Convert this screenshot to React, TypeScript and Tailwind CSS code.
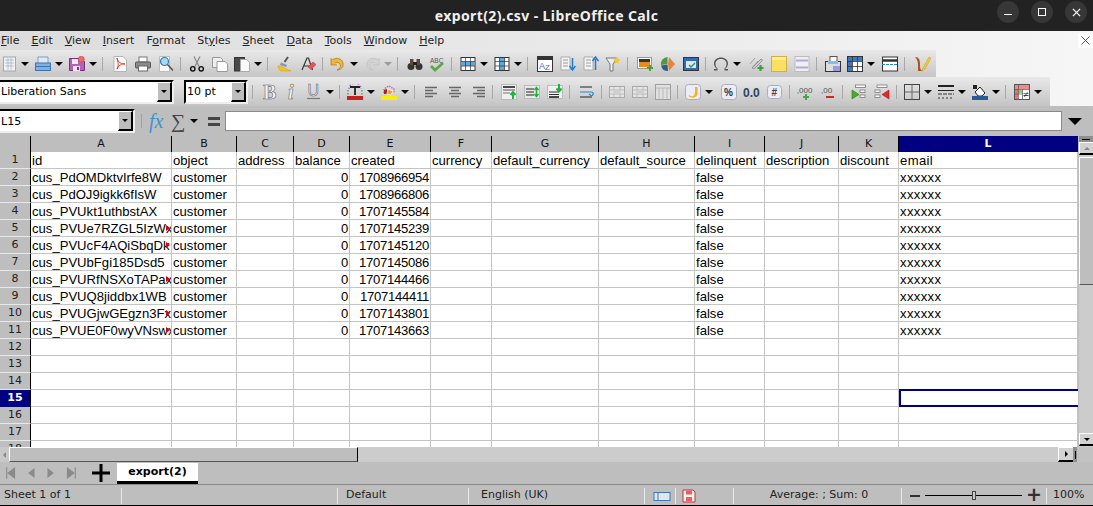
import type { ReactNode } from 'react';

const uiFont = "font-['DejaVu_Sans',sans-serif]";
const cellFont = "font-['Liberation_Sans',sans-serif]";

const menus: [string, string, string][] = [
  ['', 'F', 'ile'],
  ['', 'E', 'dit'],
  ['', 'V', 'iew'],
  ['', 'I', 'nsert'],
  ['F', 'o', 'rmat'],
  ['St', 'y', 'les'],
  ['', 'S', 'heet'],
  ['', 'D', 'ata'],
  ['', 'T', 'ools'],
  ['', 'W', 'indow'],
  ['', 'H', 'elp'],
];

const columns = ['A', 'B', 'C', 'D', 'E', 'F', 'G', 'H', 'I', 'J', 'K', 'L'];
const headers = ['id', 'object', 'address', 'balance', 'created', 'currency', 'default_currency', 'default_source', 'delinquent', 'description', 'discount', 'email'];

const customers = [
  ['cus_PdOMDktvIrfe8W', '1708966954', false],
  ['cus_PdOJ9igkk6fIsW', '1708966806', false],
  ['cus_PVUkt1uthbstAX', '1707145584', false],
  ['cus_PVUe7RZGL5IzWx', '1707145239', true],
  ['cus_PVUcF4AQiSbqDk', '1707145120', true],
  ['cus_PVUbFgi185Dsd5', '1707145086', false],
  ['cus_PVURfNSXoTAPax', '1707144466', true],
  ['cus_PVUQ8jiddbx1WB', '1707144411', false],
  ['cus_PVUGjwGEgzn3Fx', '1707143801', true],
  ['cus_PVUE0F0wyVNswx', '1707143663', true],
] as const;

function Svg({ children, className = '' }: { children: ReactNode; className?: string }) {
  return (
    <svg viewBox="0 0 16 16" className={`w-4 h-4 shrink-0 ${className}`} fill="none">
      {children}
    </svg>
  );
}

function Ic({ children }: { children: ReactNode }) {
  return <Svg className="mr-[7px]">{children}</Svg>;
}

// the B, i and U glyphs are drawn large, so their box is taller than the 16px icons
function TallIc({ children }: { children: ReactNode }) {
  return (
    <svg viewBox="0 0 16 24" className="w-4 h-6 shrink-0 mr-[7px]" fill="none">
      {children}
    </svg>
  );
}

function Arrow({ light = false }: { light?: boolean }) {
  return (
    <div className={`ml-1 w-0 h-0 border-x-4 border-x-transparent border-t-[4px] ${light ? 'border-t-[#9a9a9a]' : 'border-t-black'}`} />
  );
}

function Drop({ children, light = false }: { children: ReactNode; light?: boolean }) {
  return (
    <div className="flex items-center shrink-0 w-[34px]">
      <Svg>{children}</Svg>
      <Arrow light={light} />
    </div>
  );
}

function Sep() {
  return <div className="w-px h-[14px] bg-[#a8a8a8] -ml-px mr-[9px] shrink-0" />;
}

function Nudge({ back }: { back: 1 | 2 }) {
  return <div className={back === 1 ? '-ml-px' : '-ml-[2px]'} />;
}

function Combo({ text, className }: { text: string; className: string }) {
  return (
    <div className={`relative shrink-0 h-[24px] bg-white border-2 border-black border-r-[#eee] border-b-[#eee] flex items-center text-[11px] text-black ${uiFont} ${className}`}>
      <span className="pl-[1px] leading-none">{text}</span>
      <div className="absolute top-0 bottom-0 right-0 w-[15px] bg-[#bdbdbd] border-l border-t border-white border-r-2 border-b-2 border-r-black border-b-black flex items-center justify-center">
        <div className="w-0 h-0 border-x-[3px] border-x-transparent border-t-[3px] border-t-black" />
      </div>
    </div>
  );
}

const GridTable = ({ cols }: { cols?: boolean }) => (
  <>
    <rect x="1" y="1.5" width="14" height="13" fill="#fff" stroke="#333" />
    {cols ? <rect x="5.5" y="2" width="5" height="12" fill="#5ea8dc" /> : <rect x="1.5" y="5.5" width="13" height="4.5" fill="#5ea8dc" />}
    <path d="M1 5.5h14M1 10h14M5.5 2v12M10.5 2v12" stroke="#333" strokeWidth=".7" />
  </>
);

// alignment icons are 12px wide in the picture, two long bars and two short
const alignPaths = {
  l: 'M1 3.5h12M1 6.5h8M1 9.5h12M1 12.5h8',
  c: 'M1 3.5h12M3 6.5h8M1 9.5h12M3 12.5h8',
  r: 'M1 3.5h12M5 6.5h8M1 9.5h12M5 12.5h8',
};

const Lines = ({ kind }: { kind: 'l' | 'c' | 'r' }) => <path d={alignPaths[kind]} stroke="#666" strokeWidth="1.5" />;

const Merge = () => (
  <>
    <rect x=".5" y="2.5" width="15" height="11" fill="#e4e4e4" stroke="#a9a9a9" />
    <path d="M1 6h14M1 10h14M5 3v3M11 3v3M5 10v3M11 10v3M4 8h8" stroke="#b0b0b0" strokeWidth=".8" />
  </>
);

function Toolbar1() {
  return (
    <div className="flex items-center h-[27px] w-[936px] pl-[1px] bg-gradient-to-b from-[#e9e9e9] to-[#c6c6c6]">
      <Drop>
        <rect x="2.5" y="1" width="12" height="14" fill="#f2f2f2" stroke="#a0a8b0" />
        <path d="M4 4h9M4 7h9M4 10h9M7 2v12M10 2v12" stroke="#a6b6c6" strokeWidth=".8" />
      </Drop>
      <Drop>
        <path d="M3 1h10v7H3z" fill="#dfe9f4" stroke="#7aa0c4" />
        <rect x=".5" y="7" width="15" height="7.5" fill="#7fb0de" stroke="#3d75b0" />
        <path d="M1 10.5h14" stroke="#3d75b0" />
      </Drop>
      <Drop>
        <path d="M.5 2.5h10l5 3v9H.5z" fill="#b263b8" stroke="#7b2f80" />
        <rect x="3" y="3" width="6" height="5" fill="#f3e9f4" />
        <rect x="4" y="10" width="7" height="5" fill="#f3e9f4" />
        <rect x="8" y="11" width="2" height="3" fill="#7b2f80" />
        <circle cx="12.3" cy="3.2" r="3" fill="#ee6a62" stroke="#c93b33" strokeWidth=".5" />
      </Drop>
      <Sep />
      <Ic>
        <path d="M2 .5h9l3.500 3.500v11.500H2z" fill="#fbfbfb" stroke="#b5b5b5" />
        <path d="M5 2c1 4 2 7 0 11 1-3 5-6 8-5-3 0-7-1-8-6z" stroke="#e23b33" strokeWidth="1" />
      </Ic>
      <Ic>
        <rect x="4" y="1" width="8" height="5" fill="#fff" stroke="#777" />
        <rect x=".5" y="6" width="15" height="6" rx="1" fill="#8a8a8a" stroke="#555" />
        <rect x="3.5" y="10" width="9" height="5" fill="#fff" stroke="#666" />
      </Ic>
      <Ic>
        <path d="M1.5 .5h10v15h-10z" fill="#fafafa" stroke="#bbb" />
        <circle cx="6.5" cy="5.5" r="4" fill="#a8d8f4" stroke="#3b7ab0" strokeWidth="1.2" />
        <path d="M9.5 8.5l5.500 6" stroke="#555" strokeWidth="1.6" />
      </Ic>
      <Sep />
      <Nudge back={1} />
      <Ic>
        <path d="M5 .5l5 10M11 .5l-5 10" stroke="#888" strokeWidth="1.2" />
        <circle cx="3.8" cy="12.8" r="2.2" stroke="#111" strokeWidth="1.4" />
        <circle cx="12.2" cy="12.8" r="2.2" stroke="#111" strokeWidth="1.4" />
      </Ic>
      <Ic>
        <path d="M.5 1.5h8l2 2v8H.5z" fill="#eee" stroke="#999" />
        <path d="M5 5.5h8l2.500 2.500v7.500H5z" fill="#fff" stroke="#999" />
      </Ic>
      <Nudge back={1} />
      <Drop>
        <rect x=".5" y="1.500" width="10" height="13.500" fill="#4a4a4a" stroke="#333" />
        <path d="M6.500 3.500h6l3 3v9h-9z" fill="#fafafa" stroke="#aaa" />
      </Drop>
      <Sep />
      <Ic>
        <path d="M11 1L7.500 6" stroke="#555" strokeWidth="2" />
        <path d="M4 6.500l6 2.500-1 2-6-2z" fill="#7a98c8" />
        <path d="M1 10c3 0 5 .5 6 2l7 3H4C2 14 1 12 1 10z" fill="#f4c21c" stroke="#d09a10" strokeWidth=".5" />
      </Ic>
      <Ic>
        <path d="M2 14L7 2h1.500l4 12M4 10h6" stroke="#333" strokeWidth="1.200" />
        <path d="M8 11l5-5 3 2.500-5 5z" fill="#e8505a" stroke="#b93038" strokeWidth=".5" />
      </Ic>
      <Sep />
      <Nudge back={2} />
      <Drop>
        <path d="M2 4c4-3 10-2 11 3s-3 7-6 7c3-1 4-4 3-6S5 6 4 8z" fill="#eeb63a" stroke="#a87a18" strokeWidth=".7" />
        <path d="M1 2v7h6" fill="#eeb63a" stroke="#a87a18" strokeWidth=".7" />
      </Drop>
      <Drop light>
        <path d="M14 4C10 1 4 2 3 7s3 7 6 7c-3-1-4-4-3-6s5-2 6 0z" fill="#d2d2d2" stroke="#bdbdbd" strokeWidth=".7" />
        <path d="M15 2v7H9" fill="#d2d2d2" stroke="#bdbdbd" strokeWidth=".7" />
      </Drop>
      <Sep />
      <Ic>
        <circle cx="4" cy="10.500" r="3.500" fill="#333" />
        <circle cx="12" cy="10.500" r="3.500" fill="#333" />
        <rect x="3" y="3" width="3.500" height="6" fill="#5a4a3a" />
        <rect x="9.500" y="3" width="3.500" height="6" fill="#5a4a3a" />
        <rect x="6" y="6" width="4" height="3" fill="#222" />
      </Ic>
      <Nudge back={1} />
      <Ic>
        <text x="1" y="6.500" fontSize="6.500" fill="#555" fontFamily="Liberation Sans">ABC</text>
        <path d="M2 10l4 4 8-7" stroke="#5fa64a" strokeWidth="2.800" />
      </Ic>
      <Sep />
      <Nudge back={1} />
      <Drop><GridTable /></Drop>
      <Drop><GridTable cols /></Drop>
      <Sep />
      <Ic>
        <rect x=".5" y=".5" width="15" height="15" fill="#fff" stroke="#333" />
        <rect x="1" y="1" width="14" height="3" fill="#333" />
        <text x="2" y="13" fontSize="9" fill="#2a78c8" fontFamily="Liberation Sans">A</text>
        <text x="8" y="13.500" fontSize="8" fill="#a040b0" fontFamily="Liberation Sans">Z</text>
      </Ic>
      <Ic>
        <path d="M1 1h9v13H1z" fill="#f4f4f4" stroke="#aaa" />
        <path d="M3 4h5M3 7h5M3 10h5" stroke="#999" />
        <path d="M12.500 2v11M9.500 10l3 4 3-4" stroke="#2a78c8" strokeWidth="1.500" />
      </Ic>
      <Ic>
        <path d="M1 1h9v13H1z" fill="#f4f4f4" stroke="#aaa" />
        <path d="M3 4h5M3 7h5M3 10h5" stroke="#999" />
        <path d="M12.500 14V3M9.500 5l3-4 3 4" stroke="#2a78c8" strokeWidth="1.500" />
      </Ic>
      <Nudge back={1} />
      <Ic>
        <path d="M1 2h11L8 8v7H5V8z" fill="#eee" stroke="#777" />
        <path d="M12 .5l1 2.500 2.500.5-2 2 .5 2.500-2-1.500-2.500 1.500.5-2.500-2-2 2.500-.5z" fill="#f4c830" />
      </Ic>
      <Sep />
      <Ic>
        <rect x=".5" y="1.500" width="14" height="11" fill="#fff" stroke="#999" />
        <rect x="2" y="3" width="11" height="4" fill="#333" />
        <rect x="2" y="6" width="11" height="5" fill="#e88a1c" />
        <path d="M13 9v6M10 12h6" stroke="#44a040" strokeWidth="2" />
      </Ic>
      <Ic>
        <path d="M7.500 1A7 7 0 0 0 1 9l6.500-1z" fill="#4c9a48" />
        <path d="M9 1l6 7-6 7-1-7z" fill="#e8843c" />
        <path d="M1 9.500l6.500-1L8 15a7 7 0 0 1-7-5.500z" fill="#2c5f8c" />
      </Ic>
      <Ic>
        <rect x=".5" y="1.500" width="15" height="13" fill="#3468b8" stroke="#333" />
        <rect x="3" y="5" width="10" height="7" fill="#dce8f8" />
        <path d="M6 9l2 2 4-4" stroke="#30a040" strokeWidth="1.500" />
      </Ic>
      <Sep />
      <Nudge back={2} />
      <Drop>
        <path d="M4.500 14.500H1v-1.500h3C2.500 12 1 10 1 7.500 1 4 4 1.500 8 1.500S15 4 15 7.500c0 2.500-1.500 4.500-3 5.500h3v1.500h-3.500v-2C13 11.500 13.500 9.500 13.500 7.500 13.500 4.800 11 3 8 3S2.500 4.800 2.500 7.500c0 2 .5 4 2 5z" fill="#555" />
      </Drop>
      <div className="w-px" />
      <Ic>
        <path d="M4 12L13 3c1.500 0 1.500 1.500 1 2l-8 8z" fill="#ccc" stroke="#888" strokeWidth=".8" />
        <path d="M2 8l5-6M4 12l6-7" stroke="#888" strokeWidth=".7" />
        <path d="M12.500 9v6M9.500 12h6" stroke="#3aa040" strokeWidth="2.200" />
      </Ic>
      <Ic>
        <rect x=".5" y=".5" width="15" height="15" fill="#fbdf5f" stroke="#d0b040" />
        <path d="M1 1h14v3H1z" fill="#fdec9a" />
      </Ic>
      <Ic>
        <rect x="1" y=".5" width="14" height="15" fill="#f0f0f0" stroke="#bbb" />
        <path d="M2 3.500h12v2H2zM2 10.500h12v2H2z" fill="#aaaadc" />
      </Ic>
      <Sep />
      <Nudge back={1} />
      <Ic>
        <rect x="5" y=".5" width="7" height="5" fill="#fff" stroke="#555" />
        <rect x=".5" y="5.500" width="15" height="10" fill="#ddd" stroke="#333" />
        <rect x="3" y="5" width="10" height="3" fill="#8bbce6" />
        <rect x="8" y="10" width="7" height="5" fill="#9a9ade" />
      </Ic>
      <Nudge back={1} />
      <Drop>
        <rect x=".5" y=".5" width="15" height="15" fill="#fff" stroke="#333" />
        <path d="M1 1h14v4H1zM1 5h4v10H1z" fill="#3c78c0" />
        <path d="M.5 5.500h15M.5 10.500h15M5.500 1v14M10.500 1v14" stroke="#333" strokeWidth=".8" />
      </Drop>
      <div className="w-px" />
      <Ic>
        <rect x=".5" y="1" width="15" height="14" fill="#fff" stroke="#333" />
        <path d="M1 4.500h14" stroke="#333" strokeWidth="2.500" />
        <path d="M0 8.500h16" stroke="#2a88cc" strokeDasharray="3 1" />
      </Ic>
      <Sep />
      <Nudge back={1} />
      <svg viewBox="0 0 18 16" className="w-[18px] h-4 shrink-0">
        <path d="M2 1c4 0 5 3 5 7s0 6 3 7H5C5 10 6 5 2 1z" fill="#a8541c" />
        <path d="M10 12l6-11 2 1-6 11-3 2z" fill="#f4c830" stroke="#c89a20" strokeWidth=".5" />
      </svg>
    </div>
  );
}

function Toolbar2() {
  return (
    <div className="flex items-center h-[29px] w-[1050px] bg-gradient-to-b from-[#e9e9e9] to-[#c4c4c4]">
      <Combo text="Liberation Sans" className="w-[176px] -ml-[2px]" />
      <Combo text="10 pt" className="w-[64px] ml-[10px]" />
      <div className="w-px h-[14px] bg-[#a8a8a8] mx-[4px] shrink-0" />
      <div className="w-[5px]" />
      <TallIc><text x="1" y="18.500" fontSize="20" fontWeight="700" fontFamily="Liberation Serif" fill="#f4f4f4" stroke="#666" strokeWidth=".6">B</text></TallIc>
      <Nudge back={1} />
      <TallIc><text x="4" y="18.500" fontSize="20" fontStyle="italic" fontWeight="700" fontFamily="Liberation Serif" fill="#f4f4f4" stroke="#666" strokeWidth=".6">i</text></TallIc>
      <Nudge back={1} />
      <div className="flex items-center shrink-0 w-[34px]">
        <svg viewBox="0 0 16 24" className="w-4 h-6 shrink-0" fill="none">
          <text x="1.500" y="16" fontSize="16" fontFamily="Liberation Sans" fill="#f4f4f4" stroke="#666" strokeWidth=".6">U</text>
          <path d="M1 18.500h13" stroke="#777" strokeWidth="1.200" />
        </svg>
        <Arrow />
      </div>
      <Sep />
      <Nudge back={2} />
      <Drop>
        <path d="M2 5a6 6 0 0 1 12 0" stroke="#b06ac0" strokeDasharray="1.500 1.500" strokeWidth="1.500" />
        <path d="M3 3h10M8 3v8" stroke="#222" strokeWidth="1.800" />
        <path d="M1 6v5M15 6v5" stroke="#44b070" strokeDasharray="1.500 1.500" strokeWidth="1.500" />
        <rect x="0" y="12" width="16" height="4" fill="#c81e1e" />
      </Drop>
      <Drop>
        <path d="M3 9V5l5-3 5 3v4" stroke="#c070c0" strokeDasharray="1.500 1" strokeWidth="1.500" />
        <path d="M3 6l3-1v5H3z" fill="#b02020" />
        <path d="M7 5l5 2-2 4-4-1z" fill="#f0a030" stroke="#eee" />
        <rect x="0" y="12" width="16" height="4" fill="#f8f000" />
      </Drop>
      <Sep />
      <Svg className="mr-[8px]"><Lines kind="l" /></Svg>
      <Svg className="mr-[8px]"><Lines kind="c" /></Svg>
      <Svg className="mr-[5px]"><Lines kind="r" /></Svg>
      <Sep />
      <Nudge back={1} />
      <Ic>
        <rect x=".5" y=".5" width="15" height="15" fill="#f0f0f0" stroke="#bbb" />
        <path d="M2 3h12" stroke="#111" strokeWidth="1.500" /><path d="M2 6h12" stroke="#555" /><path d="M2 9h7" stroke="#777" />
        <path d="M12 15V9M9.500 11l2.500-3 2.500 3" stroke="#22b040" strokeWidth="2" />
      </Ic>
      <Ic>
        <rect x=".5" y="1.500" width="15" height="13" fill="#e8e8e8" stroke="#bbb" />
        <path d="M2 5h8M2 8h8M2 11h8" stroke="#222" strokeWidth="1.200" />
        <path d="M12.500 3v10M10.500 6l2-2.500 2 2.500M10.500 10l2 2.500 2-2.500" stroke="#22b040" strokeWidth="1.500" />
      </Ic>
      <Ic>
        <rect x=".5" y="1.500" width="15" height="13" fill="#f0f0f0" stroke="#bbb" />
        <path d="M2 8h10M2 10.500h10" stroke="#333" /><path d="M2 13h10" stroke="#111" strokeWidth="1.500" />
        <path d="M12 0v7M9.500 4.500l2.500 3 2.500-3" stroke="#22b040" strokeWidth="2" />
      </Ic>
      <Sep />
      <Ic>
        <path d="M1 3h12M1 13h12" stroke="#222" strokeWidth="1.200" />
        <path d="M1 8h11c3 0 3 3 .5 4M10 10l2.500 2 2-2.500" stroke="#2a88cc" strokeWidth="1.200" />
      </Ic>
      <Sep />
      <Nudge back={2} />
      <Ic><Merge /></Ic>
      <Ic><Merge /></Ic>
      <Ic>
        <rect x=".5" y=".5" width="15" height="15" fill="#e0e0e0" stroke="#a0a0a0" />
        <path d="M1 4h14M4 4v11M8 4v11M12 4v11" stroke="#b0b0b0" strokeWidth=".8" />
      </Ic>
      <Sep />
      <Nudge back={2} />
      <Drop>
        <rect x=".5" y=".5" width="15" height="15" rx="3" fill="#ececf4" stroke="#aaaac0" />
        <path d="M4 11c4 3 6 0 6-3V3h2.500v6c0 5-6 6-9 3z" fill="#f2b41e" />
      </Drop>
      <div className="w-[2px]" />
      <Ic>
        <rect x=".5" y=".5" width="15" height="15" rx="3" fill="#ececf4" stroke="#aaaac0" />
        <text x="3" y="12" fontSize="10" fontWeight="700" fontFamily="Liberation Sans" fill="#333">%</text>
      </Ic>
      <Nudge back={1} />
      <svg viewBox="0 0 17 16" className="w-[17px] h-4 shrink-0 mr-[7px]">
        <text x="0" y="12.500" fontSize="12" fontWeight="700" fontFamily="Liberation Sans" fill="#2c4560">0.0</text>
      </svg>
      <Ic>
        <rect x=".5" y="1.500" width="14" height="13" rx="3" fill="#ececf4" stroke="#aaaac0" />
        <text x="4.500" y="12" fontSize="10" fontWeight="700" fontFamily="Liberation Sans" fill="#444">#</text>
      </Ic>
      <Sep />
      <Nudge back={2} />
      <Ic>
        <text x="0" y="9" fontSize="7" fontFamily="Liberation Sans" fill="#333">,</text>
        <text x="2" y="9" fontSize="8" fontFamily="Liberation Sans" fill="#555">000</text>
        <path d="M9 10v6M6 13h6" stroke="#44a848" strokeWidth="2" />
      </Ic>
      <Ic>
        <text x="1" y="9" fontSize="8" fontFamily="Liberation Sans" fill="#555">,00</text>
        <path d="M6 13h8" stroke="#c82a2a" strokeWidth="2" />
      </Ic>
      <Sep />
      <Nudge back={1} />
      <Ic>
        <path d="M1 6v9l7-4.500z" fill="#4caa2a" stroke="#2a7a1c" strokeWidth=".6" />
        <rect x="4.500" y="1" width="10" height="2.500" fill="#fff" stroke="#777" strokeWidth=".8" />
        <rect x="9" y="6" width="5" height="2.500" fill="#fff" stroke="#777" strokeWidth=".8" />
        <rect x="9" y="11" width="5" height="2.500" fill="#fff" stroke="#777" strokeWidth=".8" />
      </Ic>
      <Ic>
        <path d="M15 6v9L8 10.500z" fill="#e02a2a" stroke="#a01c1c" strokeWidth=".6" />
        <rect x="3" y="1" width="10" height="2.500" fill="#fff" stroke="#777" strokeWidth=".8" />
        <rect x="1" y="6" width="5" height="2.500" fill="#fff" stroke="#777" strokeWidth=".8" />
        <rect x="1" y="11" width="5" height="2.500" fill="#fff" stroke="#777" strokeWidth=".8" />
      </Ic>
      <Sep />
      <Nudge back={2} />
      <Drop>
        <rect x=".5" y=".5" width="15" height="15" stroke="#444" />
        <path d="M8 1v14M1 8h14" stroke="#666" />
      </Drop>
      <Drop>
        <path d="M0 2h16" stroke="#222" strokeWidth="2" /><path d="M0 6.500h16" stroke="#222" />
        <path d="M0 10h16" stroke="#333" strokeDasharray="4 1" /><path d="M0 14h16" stroke="#333" strokeDasharray="2 2" />
      </Drop>
      <Drop>
        <path d="M3 8l5-5 5 6-3 3H6z" fill="#fff" stroke="#222" />
        <path d="M1 1h4v4H1z" fill="#222" />
        <rect x="0" y="12" width="16" height="4" fill="#2a5c94" />
      </Drop>
      <Sep />
      <Nudge back={1} />
      <Drop>
        <rect x=".5" y=".5" width="15" height="15" fill="#fff" stroke="#555" />
        <path d="M1 1h14v4H1z" fill="#f08a8a" /><path d="M1 5h3v10H1z" fill="#f07070" /><path d="M4 6h4v3H4z" fill="#7ed07e" />
        <path d="M.5 5.500h15M.5 10h8M4.500 1v14M8.500 5v10" stroke="#555" strokeWidth=".7" />
        <text x="8.500" y="13" fontSize="8" fill="#222" fontFamily="DejaVu Sans">≠</text>
      </Drop>
    </div>
  );
}

function FormulaBar() {
  return (
    <div className="h-[30px] bg-[#bebebe] flex items-center shrink-0">
      <Combo text="L15" className="w-[137px] -ml-[2px]" />
      <div className="w-px h-[14px] bg-[#a0a0a0] ml-[6px] mr-[7px]" />
      <span className="text-[20px] leading-none italic text-[#3a95d4] font-['Liberation_Serif',serif] w-[17px] -mt-[1px]">fx</span>
      <span className="text-[20px] leading-none text-[#444] ml-[5px] w-[15px] font-['Liberation_Serif',serif]">∑</span>
      <Arrow />
      <span className="ml-[10px] w-[12px] h-[9px] border-y-[3px] border-y-[#444]" />
      <div className="ml-[5px] w-[837px] h-[20px] bg-white border border-[#8a8a8a]" />
      <div className="ml-[6px] w-0 h-0 border-x-[7px] border-x-transparent border-t-[7px] border-t-black" />
    </div>
  );
}

function rowCell(col: number, row: number) {
  const empty = { text: '', right: false, clip: false };
  if (row === 1) return { ...empty, text: headers[col] };
  const customer = customers[row - 2];
  if (!customer) return empty;
  const [id, created, clip] = customer;
  if (col === 0) return { text: id, right: false, clip };
  if (col === 1) return { ...empty, text: 'customer' };
  if (col === 3) return { text: '0', right: true, clip: false };
  if (col === 4) return { text: created, right: true, clip: false };
  if (col === 8) return { ...empty, text: 'false' };
  if (col === 11) return { ...empty, text: 'xxxxxx' };
  return empty;
}

function Sheet() {
  const rows = Array.from({ length: 18 }, (_, i) => i + 1);
  return (
    <div className="flex-1 min-w-0 h-[311px] overflow-hidden">
      <div className="grid grid-cols-[31px_141px_65px_57px_56px_81px_61px_107px_96px_70px_74px_60px_179px] grid-rows-[16px] auto-rows-[17px]">
        <div className="bg-[#bebebe] border-r border-black" />
        {columns.map((c) => (
          <div
            key={c}
            className={`flex items-center justify-center text-[11px] border-r ${uiFont} ${c === 'L' ? 'bg-[#000080] text-white font-bold border-[#000080]' : 'bg-[#bebebe] text-[#111] border-black'}`}
          >
            {c}
          </div>
        ))}
        {rows.map((r) => (
          <div key={r} className="contents">
            <div
              className={`flex items-center justify-center pt-px text-[11px] border-r border-r-black border-b ${uiFont} ${r === 15 ? 'bg-[#000080] text-white font-bold border-b-[#000080]' : 'bg-[#bebebe] text-[#222] border-b-[#e8e8e8]'}`}
            >
              {r}
            </div>
            {columns.map((_, col) => {
              const cell = rowCell(col, r);
              const selected = r === 15 && col === 11;
              return (
                <div
                  key={col}
                  className={`relative overflow-hidden whitespace-nowrap bg-white text-[13.1px] leading-[18px] text-black px-[1px] ${cellFont} ${cell.right ? 'text-right tracking-[-0.28px]' : 'text-left'} ${col === 11 ? 'tracking-[0.35px]' : ''} ${
                    selected ? 'border-2 border-r-0 border-[#000080] -mt-px h-[18px]' : 'border-r border-b border-[#c4c4c4]'
                  }`}
                >
                  {cell.text}
                  {cell.clip && (
                    <div className="absolute right-[1px] top-[5px] w-0 h-0 border-y-[3px] border-y-transparent border-l-[4px] border-l-[#e00000]" />
                  )}
                </div>
              );
            })}
          </div>
        ))}
      </div>
    </div>
  );
}

function ScrollButton({ down = false }: { down?: boolean }) {
  return (
    <div className="w-[14px] h-[13px] bg-[#d2d2d2] border-t border-l border-white border-b-2 border-b-black flex items-center justify-center">
      <div className={`w-0 h-0 border-x-[3px] border-x-transparent ${down ? 'border-t-[3px] border-t-black' : 'border-b-[3px] border-b-[#888]'}`} />
    </div>
  );
}

function VerticalScroll() {
  return (
    <div className="w-[14px] bg-[#cccccc] flex flex-col h-[311px]">
      <div className="h-[6px] bg-[#8f8f8f] flex items-center justify-center"><div className="w-2 h-px bg-black" /></div>
      <ScrollButton />
      <div className="mt-[2px] h-[128px] bg-[#bebebe] border-t border-l border-white border-b border-b-[#555]" />
      <div className="flex-1" />
      <ScrollButton down />
      <div className="h-px" />
    </div>
  );
}

function Tabs() {
  return (
    <div className="h-[22px] bg-[#bebebe] flex items-center shrink-0">
      <div className="flex items-center ml-[6px] gap-[10px] shrink-0">
        <svg viewBox="0 0 14 16" className="w-[10px] h-4"><path d="M1 0v16M12 1v14L3 8z" stroke="#8a8a8a" fill="#8a8a8a" strokeWidth="1.500" /></svg>
        <svg viewBox="0 0 14 16" className="w-[10px] h-4"><path d="M12 1v14L3 8z" fill="#8a8a8a" /></svg>
        <svg viewBox="0 0 14 16" className="w-[10px] h-4"><path d="M2 1v14l9-7z" fill="#8a8a8a" /></svg>
        <svg viewBox="0 0 14 16" className="w-[10px] h-4"><path d="M13 0v16M2 1v14l9-7z" stroke="#8a8a8a" fill="#8a8a8a" strokeWidth="1.500" /></svg>
      </div>
      <svg viewBox="0 0 18 18" className="w-[18px] h-[18px] ml-[16px]"><path d="M9 0v18M0 9h18" stroke="#000" strokeWidth="3" /></svg>
      <div className={`ml-[7px] w-[81px] h-[21px] mt-[1px] bg-white border-b-[3px] border-black flex items-center justify-center text-[11px] font-bold text-black ${uiFont}`}>
        export(2)
      </div>
    </div>
  );
}

function StatusCell({ className, children }: { className: string; children?: ReactNode }) {
  return <div className={`h-[16px] flex items-center shrink-0 border-r border-[#e8e8e8] ${className}`}>{children}</div>;
}

function StatusBar() {
  return (
    <div className={`h-[22px] bg-[#bebebe] border-t border-[#8a8a8a] border-b border-b-black pt-px flex items-center text-[11px] text-[#222] shrink-0 ${uiFont}`}>
      <StatusCell className="w-[122px] pl-[4px]">Sheet 1 of 1</StatusCell>
      <StatusCell className="w-[216px]" />
      <StatusCell className="w-[131px] pl-[8px]">Default</StatusCell>
      <StatusCell className="w-[176px] pl-[12px]">English (UK)</StatusCell>
      <svg viewBox="0 0 18 16" className="w-[18px] h-4 shrink-0 ml-[8px]">
        <rect x="1" y="4.500" width="16" height="8" fill="#e6e6e6" stroke="#3a78c0" />
        <path d="M5 4.500v8" stroke="#3a78c0" />
      </svg>
      <div className="w-px h-4 bg-[#e8e8e8] ml-[4px]" />
      <svg viewBox="0 0 16 16" className="w-4 h-4 shrink-0 ml-[5px]">
        <path d="M2 2h10l2 2v10H2z" fill="#f2f2f2" stroke="#c83030" />
        <rect x="5" y="2.500" width="6" height="4" fill="#e86060" />
        <rect x="5" y="9" width="6" height="4.500" fill="#e86060" />
      </svg>
      <div className="w-px h-4 bg-[#e8e8e8] ml-[36px]" />
      <div className="w-[167px] pl-[3px] text-center whitespace-nowrap">Average: ; Sum: 0</div>
      <div className="w-px h-4 bg-[#e8e8e8]" />
      <div className="w-[10px] h-[2px] bg-[#333] ml-[8px]" />
      <div className="relative w-[97px] h-px bg-black ml-[5px]">
        <div className="absolute left-[47px] -top-[4px] w-[4px] h-[9px] bg-[#ccc] border border-[#444]" />
      </div>
      <span className="ml-[4px] text-[19px] leading-none font-bold text-[#333] -mt-[2px]">+</span>
      <div className="w-px h-4 bg-[#e8e8e8] ml-[4px]" />
      <span className="ml-[6px]">100%</span>
    </div>
  );
}

export default function App() {
  return (
    <div className="w-[1093px] h-[506px] overflow-hidden bg-[#bebebe] flex flex-col">
      <div className="h-[31px] bg-[#222222] relative flex items-center justify-center shrink-0">
        <span className="text-[14px] font-bold tracking-[0.4px] text-[#f0f0f0] font-['Noto_Sans',sans-serif]">export(2).csv - LibreOffice Calc</span>
        <div className="absolute right-[6px] top-[1px] flex gap-[12px]">
          <button className="w-[22px] h-[22px] rounded-full bg-[#373737] flex items-center justify-center">
            <div className="w-2 h-[1.5px] bg-white mt-[5px]" />
          </button>
          <button className="w-[22px] h-[22px] rounded-full bg-[#373737] flex items-center justify-center">
            <div className="w-2 h-2 border border-white" />
          </button>
          <button className="w-[22px] h-[22px] rounded-full bg-[#373737] flex items-center justify-center">
            <svg viewBox="0 0 10 10" className="w-[9px] h-[9px]"><path d="M1 1l8 8M9 1l-8 8" stroke="#fff" strokeWidth="1.300" /></svg>
          </button>
        </div>
      </div>

      {/* toolbars sit on the pale menu ground, they stop short of the right edge */}
      <div className="bg-gradient-to-r from-[#dcdcdc] to-[#f6f6f6] shrink-0">
        <div className={`relative h-[19px] flex items-center pt-[1px] text-[11px] text-[#222] ${uiFont}`}>
          <div className="flex gap-[12px] pl-[1px]">
            {menus.map(([before, key, after]) => (
              <span key={key + after}>
                {before}
                <span className="underline">{key}</span>
                {after}
              </span>
            ))}
          </div>
          <div className="absolute right-0 top-[2px] w-[15px] h-[15px] bg-white flex items-center justify-center">
            <svg viewBox="0 0 10 10" className="w-[9px] h-[9px]"><path d="M.5.5l9 9M9.500.5l-9 9" stroke="#444" /></svg>
          </div>
        </div>
        <Toolbar1 />
        <Toolbar2 />
      </div>

      <FormulaBar />

      <div className="flex shrink-0">
        <Sheet />
        <VerticalScroll />
      </div>

      <div className="h-[15px] bg-[#cccccc] flex items-stretch shrink-0">
        <div className="w-[9px] bg-[#c8c8c8] flex items-center justify-center">
          <div className="w-0 h-0 border-y-[3px] border-y-transparent border-r-[3px] border-r-[#888]" />
        </div>
        <div className="w-[349px] bg-[#bebebe] border-l border-t border-white border-r border-r-black border-b border-b-[#555]" />
        <div className="flex-1" />
        <div className="w-[15px] bg-[#d2d2d2] border-t border-l border-white border-b-2 border-b-black flex items-center justify-center">
          <div className="w-0 h-0 border-y-[3px] border-y-transparent border-l-[3px] border-l-black" />
        </div>
        <div className="w-[4px] bg-[#8f8f8f] flex items-center justify-center"><div className="w-px h-2 bg-black" /></div>
        <div className="w-[16px] bg-[#c2c2c2]" />
      </div>

      <Tabs />
      <StatusBar />
    </div>
  );
}
